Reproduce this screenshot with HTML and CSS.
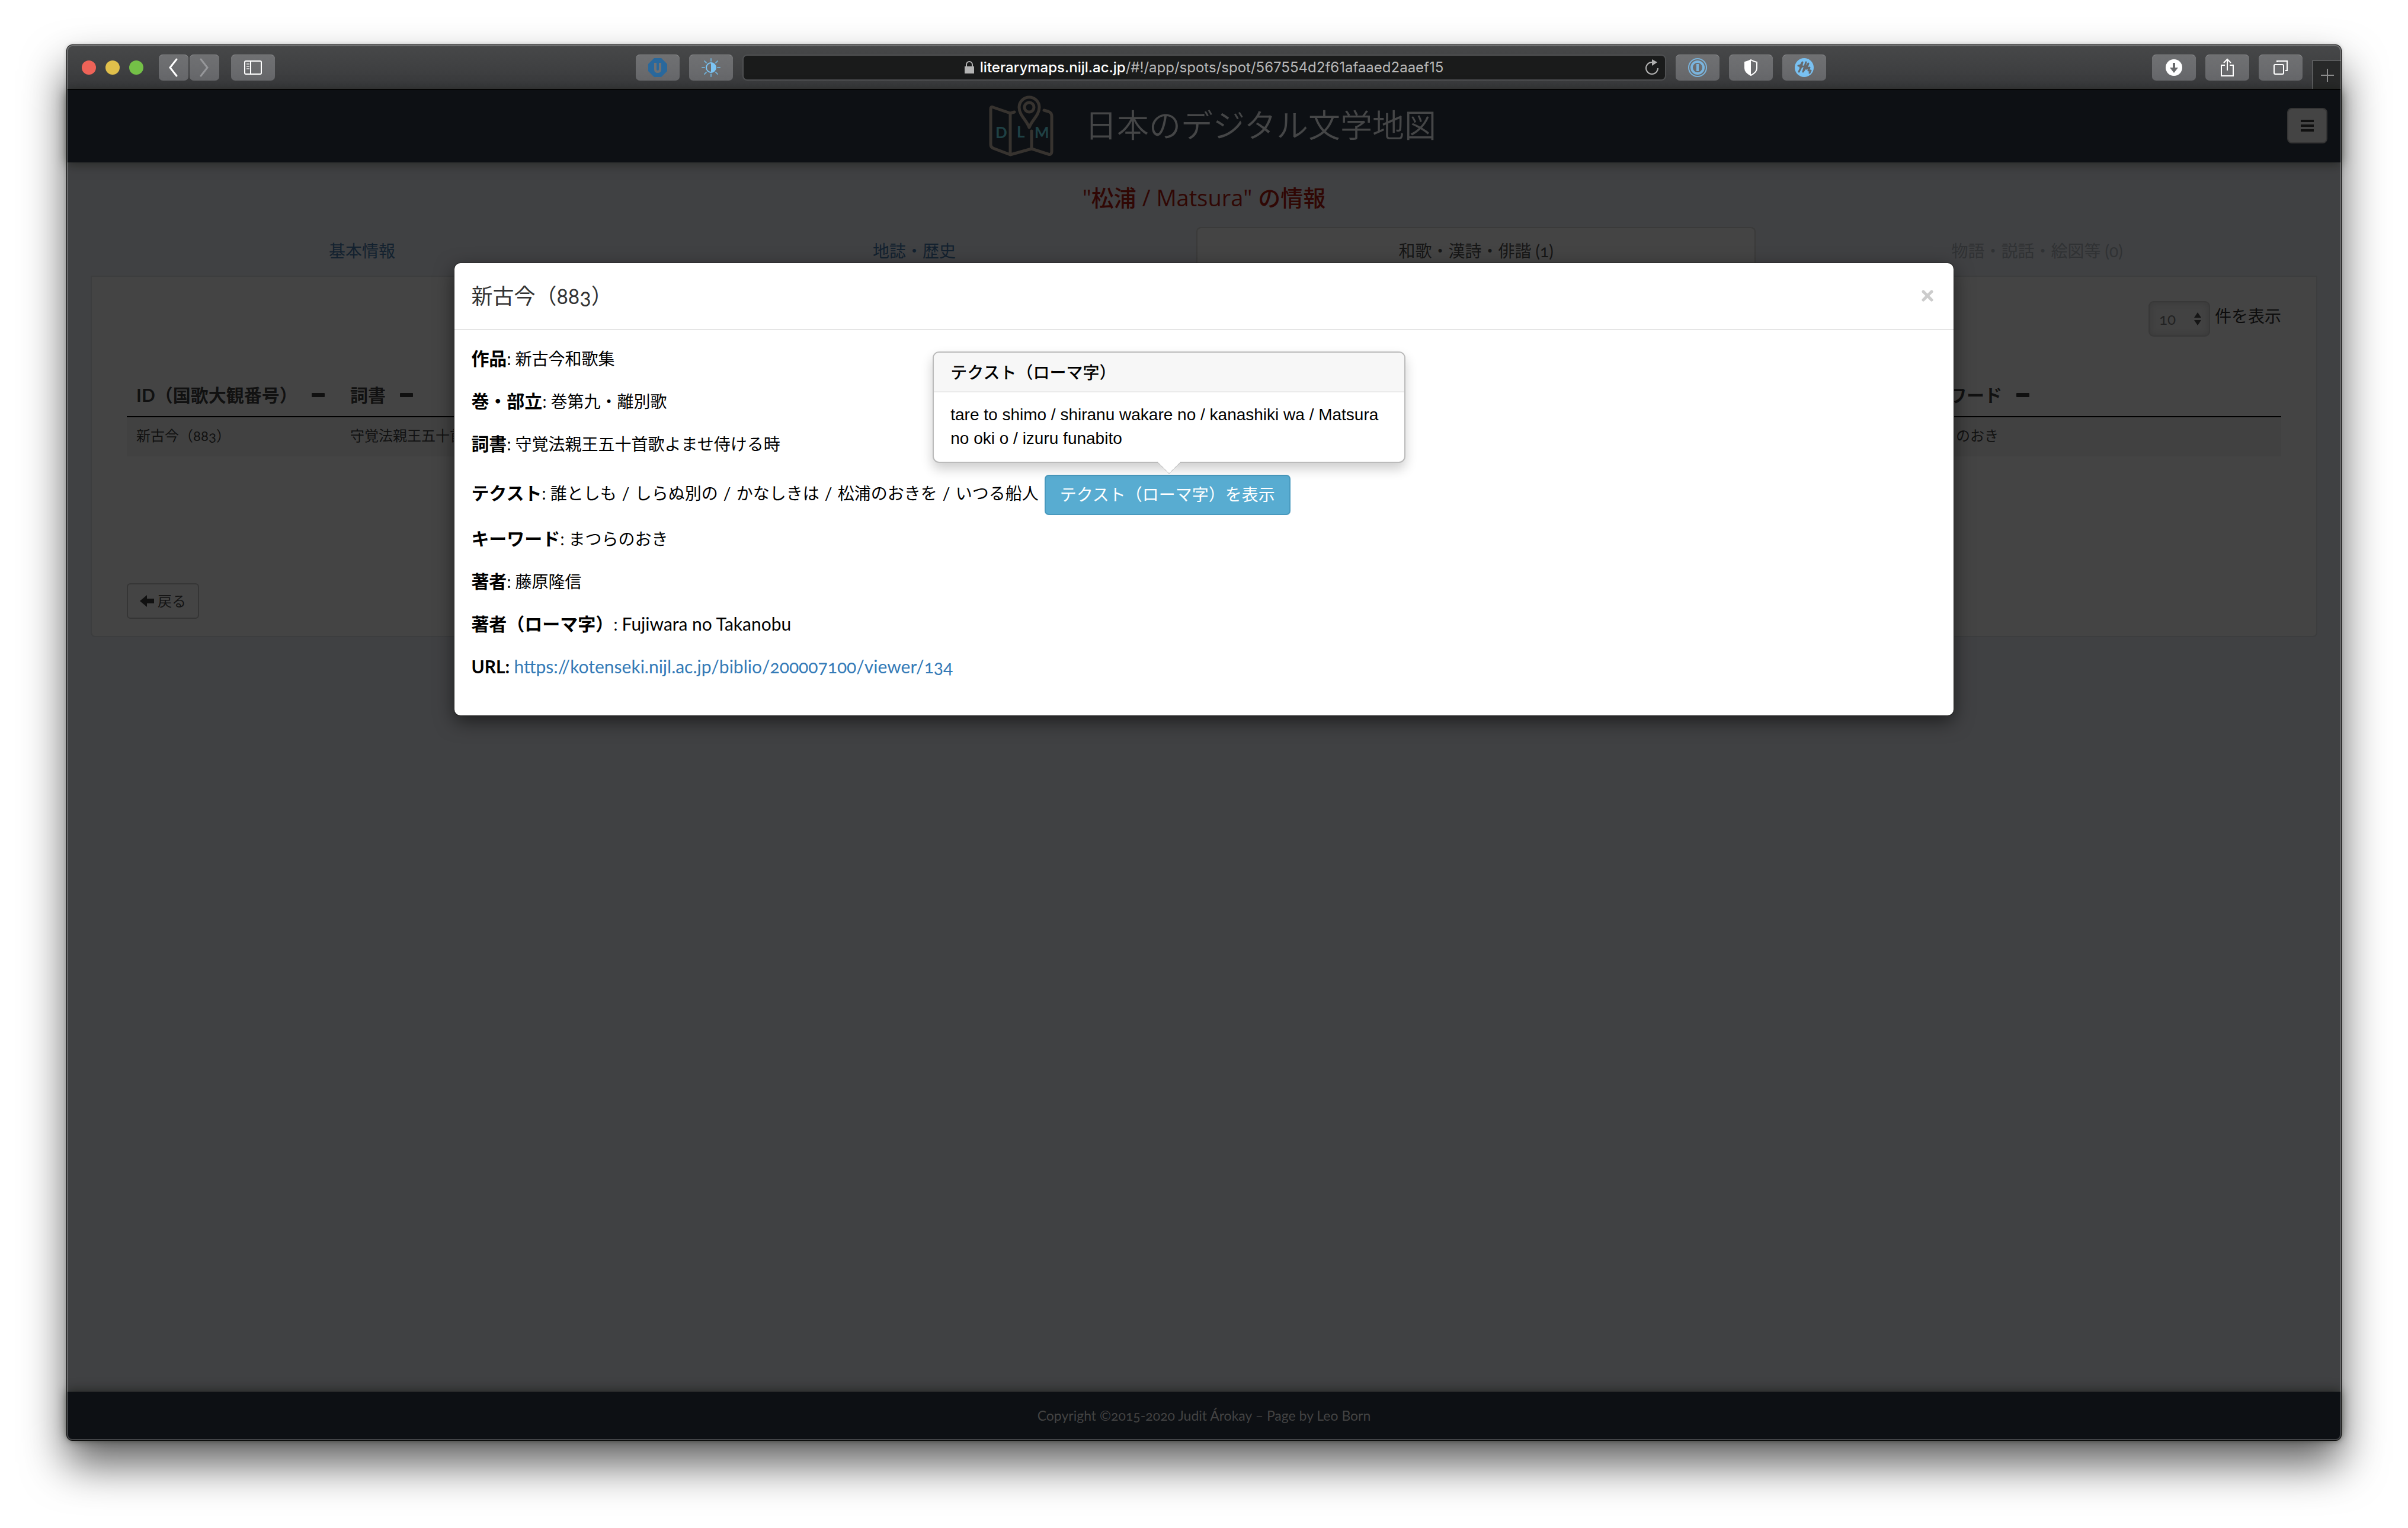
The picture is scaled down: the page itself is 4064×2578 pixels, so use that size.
FILE: index.html
```html
<!DOCTYPE html>
<html lang="ja">
<head>
<meta charset="utf-8">
<title>日本のデジタル文学地図</title>
<link rel="stylesheet" href="styles.css">
</head>
<body>
<div class="window">
  <div class="toolbar">
    <div class="toolbar-left">
      <div class="lights">
        <span class="light light-red"></span>
        <span class="light light-yellow"></span>
        <span class="light light-green"></span>
      </div>
      <div class="history">
        <button class="tool tool-narrow" type="button" aria-label="Back"><svg width="20" height="36" viewBox="0 0 20 36"><path d="M15 4 4 18l11 14" fill="none" stroke="#fff" stroke-width="3" stroke-linecap="round"/></svg></button>
        <button class="tool tool-narrow" type="button" aria-label="Forward"><svg width="20" height="36" viewBox="0 0 20 36"><path d="M4 4l11 14L4 32" fill="none" stroke="#96979a" stroke-width="3" stroke-linecap="round"/></svg></button>
      </div>
      <button class="tool" type="button" aria-label="Sidebar"><svg width="32" height="28" viewBox="0 0 32 28"><rect x="2" y="3" width="28" height="22" rx="2" fill="none" stroke="#fff" stroke-width="2"/><path d="M12 3v22" stroke="#fff" stroke-width="2"/><path d="M5 8h5M5 12h5M5 16h5" stroke="#ccc" stroke-width="2"/></svg></button>
    </div>
    <div class="toolbar-center">
      <button class="tool" type="button" aria-label="Blocker"><svg width="32" height="32" viewBox="0 0 32 32"><path d="M10 0h12l10 10v12L22 32H10L0 22V10z" fill="#29689c"/><path d="M12 8v11q0 4 4 4t4-4V8" fill="none" stroke="#6f7173" stroke-width="4"/></svg></button>
      <button class="tool" type="button" aria-label="Dark mode"><svg width="32" height="32" viewBox="0 0 32 32"><circle cx="16" cy="16" r="8" fill="none" stroke="#7cc5f5" stroke-width="2"/><path d="M16 8a8 8 0 0 1 0 16z" fill="#7cc5f5"/><path d="M16 1v4M16 27v4M1 16h4M27 16h4M5 5l3 3M24 24l3 3M5 27l3-3M24 8l3-3" stroke="#6fa9cd" stroke-width="2" stroke-linecap="round"/></svg></button>
      <button class="address" type="button">
        <span class="address-text"><svg width="16" height="22" viewBox="0 0 16 22"><path d="M0 9h16v12H0z" fill="#b4b4b4"/><path d="M3 10V6a5 5 0 0 1 10 0v4" fill="none" stroke="#b4b4b4" stroke-width="2"/></svg><span><b>literarymaps.nijl.ac.jp</b>/#!/app/spots/spot/567554d2f61afaaed2aaef15</span></span>
        <svg class="reload" width="24" height="28" viewBox="0 0 24 28"><path d="M12 5a10 10 0 1 0 10 10" fill="none" stroke="#b0b0b0" stroke-width="2"/><path d="M12 0l9 5-9 6z" fill="#b0b0b0"/></svg>
      </button>
      <button class="tool" type="button" aria-label="Passwords"><svg width="32" height="32" viewBox="0 0 32 32"><circle cx="16" cy="16" r="15" fill="none" stroke="#7ab4dd" stroke-width="2"/><circle cx="16" cy="16" r="10" fill="none" stroke="#7ab4dd" stroke-width="4"/><path d="M16 10v12" stroke="#7ab4dd" stroke-width="4"/></svg></button>
      <button class="tool" type="button" aria-label="Privacy report"><svg width="24" height="28" viewBox="0 0 24 28"><path d="M12 1c3 2 6 3 10 4v10c0 5-4 9-10 12C6 24 2 20 2 15V5c4-1 7-2 10-4z" fill="none" stroke="#fff" stroke-width="2"/><path d="M12 1v26C6 24 2 20 2 15V5c4-1 7-2 10-4z" fill="#fff"/></svg></button>
      <button class="tool" type="button" aria-label="Extension"><svg width="32" height="32" viewBox="0 0 32 32"><circle cx="16" cy="16" r="16" fill="#79c1f2"/><path d="M6 13l4-1 3-5-2 8-4 8M9 15l5-1M19 7l-5 16 9-14-3 9 5-2-2 5 4 0-2 4" fill="none" stroke="#66696c" stroke-width="3" stroke-linecap="round" stroke-linejoin="round"/></svg></button>
    </div>
    <div class="toolbar-right">
      <button class="tool" type="button" aria-label="Downloads"><svg width="28" height="28" viewBox="0 0 28 28"><circle cx="14" cy="14" r="14" fill="#fff"/><path d="M12 6h4v8h5l-7 9-7-9h5z" fill="#6a6b6d"/></svg></button>
      <button class="tool" type="button" aria-label="Share"><svg width="24" height="32" viewBox="0 0 24 32"><path d="M8 12H2v18h20V12h-6M12 21V2M6 8l6-6 6 6" fill="none" stroke="#fff" stroke-width="2"/></svg></button>
      <button class="tool" type="button" aria-label="Tabs"><svg width="26" height="26" viewBox="0 0 26 26"><rect x="2" y="8" width="16" height="16" rx="2" fill="none" stroke="#fff" stroke-width="2"/><path d="M7 4V2h17v16h-3" fill="none" stroke="#fff" stroke-width="2"/></svg></button>
      <button class="new-tab" type="button" aria-label="New tab"><svg width="24" height="24" viewBox="0 0 24 24"><path d="M12 1v22M1 12h22" stroke="#8c8c8c" stroke-width="2"/></svg></button>
    </div>
  </div>

  <div class="viewport">
    <header class="site-header">
      <a class="brand" href="#">
        <svg width="114" height="106" viewBox="0 0 114 106">
          <g fill="none" stroke="#37332f" stroke-width="5" stroke-linejoin="round" stroke-linecap="round">
            <path d="M46 30l-7 2L10 22q-4-2-4 3v60q0 4 4 6l29 11 36-10 28 9q6 2 6-5V37q0-6-6-8l-7-2M39 32v69M75 62v30"/>
            <path d="M71 56C66 43 54 35 54 22a17 17 0 0 1 34 0c0 13-12 21-17 34z"/>
            <circle cx="71" cy="22" r="8"/>
          </g>
          <g class="brand-letters"><text x="14" y="74">D</text><text x="50" y="73">L</text><text x="80" y="74">M</text></g>
        </svg>
        <span>日本のデジタル文学地図</span>
      </a>
      <button class="menu" type="button" aria-label="メニュー"><svg width="22" height="22" viewBox="0 0 22 22"><path d="M0 3h22M0 11h22M0 19h22" stroke="#101010" stroke-width="4"/></svg></button>
    </header>

    <main class="content">
      <h1 class="page-title">"松浦 / Matsura" の情報</h1>
      <nav class="tabs">
        <a class="tab" href="#">基本情報</a>
        <a class="tab" href="#">地誌・歴史</a>
        <a class="tab tab-active" href="#">和歌・漢詩・俳諧 (1)</a>
        <a class="tab tab-disabled" href="#">物語・説話・絵図等 (0)</a>
      </nav>
      <section class="panel">
        <div class="page-size">
          <span class="select-box">
            <select id="page-size"><option>10</option></select>
            <svg width="12" height="24" viewBox="0 0 12 24"><path d="M0 10 6 1l6 9zM0 14l6 9 6-9z" fill="#151515"/></svg>
          </span>
          <label for="page-size">件を表示</label>
        </div>
        <table class="poems">
          <thead>
            <tr>
              <th class="col-id">ID（国歌大観番号）<i class="minus"></i></th>
              <th>詞書<i class="minus"></i></th>
              <th class="col-keyword">キーワード<i class="minus"></i></th>
            </tr>
          </thead>
          <tbody>
            <tr><td>新古今（883）</td><td>守覚法親王五十首歌よませ侍ける時</td><td>まつらのおき</td></tr>
          </tbody>
        </table>
        <button class="back" type="button"><svg width="24" height="20" viewBox="0 0 24 20"><path d="M0 10 12 0v6h12v8H12v6z" fill="#111"/></svg>戻る</button>
      </section>
    </main>

    <footer class="site-footer">Copyright ©2015-2020 Judit Árokay – Page by Leo Born</footer>

    <div class="modal-layer">
      <div class="modal" role="dialog" aria-labelledby="modal-title">
        <div class="modal-header">
          <h2 id="modal-title">新古今（883）</h2>
          <button class="close" type="button" aria-label="閉じる"><svg width="20" height="20" viewBox="0 0 20 20"><path d="M3 3l14 14M17 3 3 17" stroke="#ccc" stroke-width="5" stroke-linecap="round"/></svg></button>
        </div>
        <div class="modal-body">
          <p><b>作品</b>: 新古今和歌集</p>
          <p><b>巻・部立</b>: 巻第九・離別歌</p>
          <p><b>詞書</b>: 守覚法親王五十首歌よませ侍ける時</p>
          <div class="action-row">
            <span class="verse"><b>テクスト</b>: 誰としも <i>/</i> しらぬ別の <i>/</i> かなしきは <i>/</i> 松浦のおきを <i>/</i> いつる船人</span>
            <span class="popover-anchor">
              <button class="reveal" type="button">テクスト（ローマ字）を表示</button>
              <span class="popover" role="tooltip">
                <span class="popover-title">テクスト（ローマ字）</span>
                <span class="popover-body">tare to shimo / shiranu wakare no / kanashiki wa / Matsura no oki o / izuru funabito</span>
                <svg class="popover-arrow" width="44" height="22" viewBox="0 0 44 22"><path d="M2 0h40L22 20z" fill="#fff"/><path d="M2 0l20 20L42 0" fill="none" stroke="#b4b4b4" stroke-width="1"/></svg>
              </span>
            </span>
          </div>
          <p><b>キーワード</b>: まつらのおき</p>
          <p><b>著者</b>: 藤原隆信</p>
          <p><b>著者（ローマ字）</b>: <span class="latin">Fujiwara no Takanobu</span></p>
          <p><b>URL:</b> <a class="latin" href="#">https://kotenseki.nijl.ac.jp/biblio/200007100/viewer/134</a></p>
        </div>
      </div>
    </div>
  </div>
</div>
</body>
</html>
```
FILE: styles.css
```css
* { box-sizing: border-box; }

body {
  margin: 0;
  min-height: 100vh;
  padding: 75px 112px 147px;
  display: flex;
  background: #fff;
  font-family: Lato, "Noto Sans CJK JP", sans-serif;
  font-variant-numeric: oldstyle-nums;
  font-size: 28px;
  line-height: 40px;
  color: #000;
}

button, select { font: inherit; color: inherit; margin: 0; padding: 0; border: 0; background: none; }
button svg { display: block; }
a { text-decoration: none; }

/* Browser window */
.window {
  flex: 1;
  min-width: 0;
  display: flex;
  flex-direction: column;
  position: relative;
  border: 1px solid #060606;
  border-radius: 10px;
  background: #404143;
  box-shadow: 0 40px 72px rgba(0, 0, 0, .62), 0 0 6px rgba(0, 0, 0, .2);
}
.window::after {
  content: "";
  position: absolute;
  inset: 0;
  border-radius: 9px;
  box-shadow: inset 0 0 0 2px rgba(255, 255, 255, .22);
  pointer-events: none;
}

.toolbar {
  display: flex;
  height: 76px;
  padding-top: 16px;
  border-bottom: 2px solid #020203;
  border-radius: 9px 9px 0 0;
  background: linear-gradient(#474849, #38393b);
}
.toolbar-left { flex: 0 0 25%; display: flex; padding-left: 25px; }
.toolbar-center { flex: 0 0 52.35%; display: flex; gap: 16px; }
.toolbar-right { flex: 1; display: flex; justify-content: flex-end; gap: 16px; }

.lights { display: flex; gap: 16px; height: 44px; align-items: center; margin-right: 26px; }
.light { width: 24px; height: 24px; border-radius: 50%; }
.light-red { background: #ee6358; }
.light-yellow { background: #e0bf4b; }
.light-green { background: #74c047; }
.history { display: flex; gap: 2px; margin-right: 20px; }

.tool {
  width: 74px;
  height: 44px;
  flex: none;
  display: flex;
  align-items: center;
  justify-content: center;
  border-radius: 7px;
  background: linear-gradient(#707173, #66676a);
  box-shadow: inset 0 1px 0 #88898b;
}
.tool-narrow { width: 50px; }

.address {
  flex: 1;
  height: 44px;
  display: grid;
  grid-template-columns: 1fr auto 1fr;
  align-items: center;
  border: 2px solid #4f5052;
  border-radius: 8px;
  background: #1a1b1b;
  color: #b7b7b7;
  font-family: Inter, sans-serif;
  font-size: 24px;
  font-variant-numeric: normal;
}
.address-text { grid-column: 2; display: flex; align-items: center; gap: 10px; }
.address b { font-weight: 500; color: #fff; }
.reload { justify-self: end; margin-right: 10px; }

.new-tab {
  width: 49px;
  height: 49px;
  margin-top: 9px;
  display: flex;
  align-items: center;
  justify-content: center;
  border: 2px solid #5a5b5c;
  border-width: 2px 0 0 2px;
  background: #282929;
}

/* Site */
.viewport { flex: 1; display: flex; flex-direction: column; position: relative; }

.site-header {
  height: 122px;
  display: grid;
  grid-template-columns: 1fr auto 1fr;
  align-items: center;
  padding: 0 23px 2px;
  background: #0d1014;
  box-shadow: 0 2px 18px rgba(10, 14, 6, .5);
}
.brand { grid-column: 2; display: flex; align-items: center; gap: 51px; padding-left: 26px; color: #454647; font-size: 54px; font-weight: 350; line-height: 76px; }
.brand-letters { fill: #1f4145; font-size: 26px; font-weight: 700; }
.menu {
  justify-self: end;
  width: 68px;
  height: 60px;
  display: flex;
  align-items: center;
  justify-content: center;
  border: 2px solid #353535;
  border-radius: 8px;
  background: #444;
}

.content { flex: 1; padding: 34px 40px 0; }
.page-title { margin: 0 0 25px; text-align: center; font-family: "Open Sans", "Noto Sans CJK JP", sans-serif; font-size: 38px; line-height: 50px; font-weight: 500; color: #300704; }

.tabs { display: grid; grid-template-columns: 916fr 948fr 948fr 946fr; }
.tab { height: 82px; padding-top: 20px; text-align: center; color: #13212f; }
.tab-active { margin: 0 2px; padding-top: 18px; border: 2px solid #3a3a3a; border-bottom: 0; border-radius: 8px 8px 0 0; background: #444; color: #161616; }
.tab-disabled { color: #303234; }

.panel {
  padding: 41px 59px 29px;
  border: 2px solid #3c3d3e;
  border-radius: 0 0 8px 8px;
  background: #444;
}
.page-size { display: flex; justify-content: flex-end; gap: 8px; color: #0c0c0c; line-height: 50px; }
.select-box { display: grid; align-items: center; }
.select-box > * { grid-area: 1 / 1; }
.select-box svg { justify-self: end; margin-right: 15px; pointer-events: none; }
.page-size select {
  appearance: none;
  width: 104px;
  height: 60px;
  padding-left: 16px;
  border: 2px solid #383838;
  border-radius: 9px;
  background: #424242;
  box-shadow: inset 0 0 12px rgba(0, 0, 0, .15);
  font-size: 26px;
  color: #222;
}

.poems { width: 100%; margin-top: 78px; border-collapse: collapse; table-layout: fixed; color: #111; }
.poems th { padding: 0 16px 16px; text-align: left; font-size: 30px; line-height: 40px; border-bottom: 2px solid #000; white-space: nowrap; }
.poems td { padding: 15px 16px 19px; font-size: 24px; line-height: 32px; background: #414141; }
.col-id { width: 361px; }
.col-keyword { width: 637px; }
.minus { display: inline-block; width: 22px; height: 7px; margin-left: 24px; border-radius: 1px; background: #101010; vertical-align: 8px; }

.back {
  display: flex;
  align-items: center;
  gap: 6px;
  height: 60px;
  margin-top: 214px;
  padding: 0 20px;
  border: 2px solid #353535;
  border-radius: 6px;
  font-size: 24px;
  color: #141414;
}

.site-footer {
  height: 82px;
  padding-top: 20px;
  border-radius: 0 0 9px 9px;
  background: #0d1014;
  box-shadow: 0 -2px 18px rgba(10, 14, 6, .5);
  text-align: center;
  font-size: 23px;
  color: #434343;
}

/* Modal */
.modal-layer { position: absolute; inset: 0; padding-top: 292px; display: flex; justify-content: center; align-items: flex-start; }
.modal { width: 65.9%; border-radius: 10px; background: #fff; box-shadow: 0 10px 32px rgba(0, 0, 0, .55), 0 0 0 1px #2b2b2b; }
.modal-header { display: flex; justify-content: space-between; align-items: center; height: 113px; padding: 0 34px 2px 28px; border-bottom: 2px solid #e5e5e5; }
.modal-header h2 { margin: 0; font-size: 36px; line-height: 50px; font-weight: 400; color: #333; }
.modal-body { padding: 22px 28px 56px; line-height: 52px; }
.modal-body p { margin: 0 0 20px; }
.modal-body p:last-child { margin: 0; }
.modal-body b { font-size: 30px; font-weight: 700; line-height: 40px; }
.modal-body .latin { font-size: 30px; line-height: 40px; }
.modal-body a { color: #337ab7; }

.action-row { display: flex; align-items: center; gap: 10px; margin: 26px 0 14px; }
.verse { padding-bottom: 6px; }
.verse i { font-style: normal; margin: 0 2px; }
.popover-anchor { position: relative; display: flex; }
.reveal {
  height: 68px;
  padding: 0 24px 2px;
  border: 2px solid #4899be;
  border-radius: 7px;
  background: #58acd1;
  color: #fff;
}
.popover {
  position: absolute;
  bottom: calc(100% + 20px);
  left: 50%;
  width: 798px;
  margin-left: -396px;
  border: 2px solid #bbb;
  border-radius: 11px;
  background: #fff;
  box-shadow: 0 10px 20px rgba(0, 0, 0, .2);
}
.popover-title { display: block; padding: 13px 28px 12px; border-bottom: 2px solid #ebebeb; border-radius: 9px 9px 0 0; background: #f7f7f7; font-weight: 500; }
.popover-body { display: block; padding: 18px 28px 19px; font-family: "Liberation Sans", Arial, sans-serif; }
.popover span { line-height: 40px; }
.popover-arrow { position: absolute; top: 100%; left: 50%; margin-left: -22px; }
```
